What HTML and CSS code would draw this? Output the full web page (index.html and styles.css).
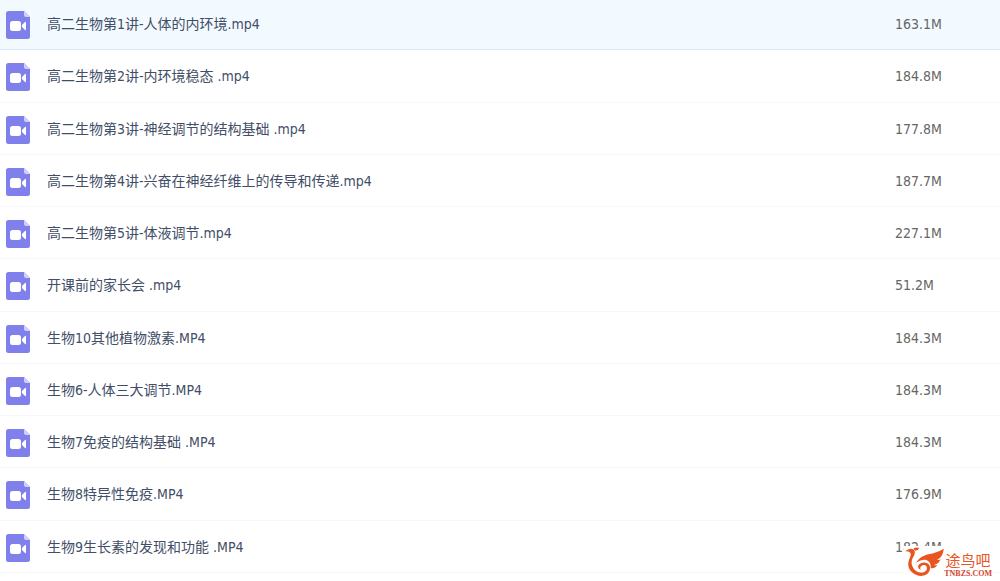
FILE: index.html
```html
<!DOCTYPE html>
<html lang="zh-CN">
<head>
<meta charset="utf-8">
<meta name="viewport" content="width=device-width, initial-scale=1">
<title>高二生物</title>
<link rel="stylesheet" href="styles.css">
</head>
<body>
<svg class="sprite" aria-hidden="true">
  <symbol id="video-file" viewBox="0 0 26 30">
    <path fill="#8080ec" d="M3.500 1h15.500l6 6v19.500a2.500 2.500 0 0 1-2.500 2.500h-19a2.500 2.500 0 0 1-2.500-2.500v-23a2.500 2.500 0 0 1 2.500-2.500z"/>
    <path fill="#d0d0fa" d="M19 1l6 6h-4a2 2 0 0 1-2-2z"/>
    <rect x="5" y="11" width="11" height="10" rx="2.500" fill="#fff"/>
    <path fill="#fff" d="M17 15l3-3q1-.7 1 .5v7q0 1.200-1 .5l-3-3z"/>
  </symbol>
</svg>
<main class="files">
  <table class="file-table">
    <tbody>
      <tr class="file-row selected"><td class="icon-cell"><svg class="file-icon"><use href="#video-file"/></svg></td><td class="name">高二生物第1讲-人体的内环境.mp4</td><td class="size">163.1M</td></tr>
      <tr class="file-row"><td class="icon-cell"><svg class="file-icon"><use href="#video-file"/></svg></td><td class="name">高二生物第2讲-内环境稳态 .mp4</td><td class="size">184.8M</td></tr>
      <tr class="file-row"><td class="icon-cell"><svg class="file-icon"><use href="#video-file"/></svg></td><td class="name">高二生物第3讲-神经调节的结构基础 .mp4</td><td class="size">177.8M</td></tr>
      <tr class="file-row"><td class="icon-cell"><svg class="file-icon"><use href="#video-file"/></svg></td><td class="name">高二生物第4讲-兴奋在神经纤维上的传导和传递.mp4</td><td class="size">187.7M</td></tr>
      <tr class="file-row"><td class="icon-cell"><svg class="file-icon"><use href="#video-file"/></svg></td><td class="name">高二生物第5讲-体液调节.mp4</td><td class="size">227.1M</td></tr>
      <tr class="file-row"><td class="icon-cell"><svg class="file-icon"><use href="#video-file"/></svg></td><td class="name">开课前的家长会 .mp4</td><td class="size">51.2M</td></tr>
      <tr class="file-row"><td class="icon-cell"><svg class="file-icon"><use href="#video-file"/></svg></td><td class="name">生物10其他植物激素.MP4</td><td class="size">184.3M</td></tr>
      <tr class="file-row"><td class="icon-cell"><svg class="file-icon"><use href="#video-file"/></svg></td><td class="name">生物6-人体三大调节.MP4</td><td class="size">184.3M</td></tr>
      <tr class="file-row"><td class="icon-cell"><svg class="file-icon"><use href="#video-file"/></svg></td><td class="name">生物7免疫的结构基础 .MP4</td><td class="size">184.3M</td></tr>
      <tr class="file-row"><td class="icon-cell"><svg class="file-icon"><use href="#video-file"/></svg></td><td class="name">生物8特异性免疫.MP4</td><td class="size">176.9M</td></tr>
      <tr class="file-row"><td class="icon-cell"><svg class="file-icon"><use href="#video-file"/></svg></td><td class="name">生物9生长素的发现和功能 .MP4</td><td class="size">182.4M</td></tr>
    </tbody>
  </table>
  <div class="watermark">
    <svg class="bird" viewBox="0 0 120 93" aria-hidden="true">
      <path fill="#e8551f" d="M3 16Q15 6 25 9Q36 12 31 27C25 38 19 48 26 62C33 80 60 86 68 71C72 60 60 52 51 61Q46 66 50 72C36 65 43 51 57 50C74 48 83 62 76 76C70 89 52 93 38 87C18 79 9 63 14 45C17 34 23 28 19 20Q13 15 3 16Z"/>
      <path fill="#e8551f" d="M28 8Q35 2 46 6Q43 14 34 14Z"/>
      <path fill="#e8551f" d="M36 50C50 28 70 26 88 22Q106 17 119 8C118 28 108 36 99 42Q106 43 110 40C104 52 98 55 89 57Q95 59 100 57C94 66 87 68 80 66C82 53 75 43 63 41Q50 40 36 50Z"/>
    </svg>
    <div class="brand">
      <span class="brand-name">途鸟吧</span>
      <span class="brand-site">TNBZS.COM</span>
    </div>
  </div>
</main>
</body>
</html>
```

FILE: styles.css
```css
body {
  margin: 0;
  background: #fff;
  color: #424e67;
  font-family: "DejaVu Sans Condensed", "Noto Sans", "Noto Sans CJK SC", sans-serif;
  font-size: 14px;
  line-height: 20px;
}

.sprite {
  position: absolute;
  width: 0;
  height: 0;
}

.files {
  position: relative;
  padding-bottom: 8px;
}

.file-table {
  width: 100%;
  table-layout: fixed;
  border-collapse: separate;
  border-spacing: 0;
}

.file-row td {
  box-sizing: border-box;
  height: 52px;
  padding: 0;
  border-bottom: 1px solid #f7f8fb;
  vertical-align: middle;
}

.file-row:nth-child(4n + 2) td {
  height: 53px;
}

.file-row.selected td {
  height: 50px;
  padding-bottom: 2px;
  background: #f3faff;
  border-bottom-color: #d9eaf7;
}

.file-row .icon-cell {
  width: 47px;
  padding-top: 2px;
  padding-left: 5px;
}

.file-icon {
  display: block;
  width: 26px;
  height: 30px;
}

.file-row .size {
  width: 105px;
  color: #666;
}

.watermark {
  position: absolute;
  right: 8px;
  bottom: 3px;
  display: flex;
  align-items: flex-start;
}

.bird {
  width: 40px;
  height: 31px;
  background: #fff;
}

.brand {
  display: flex;
  flex-direction: column;
  align-items: center;
  gap: 2px;
  padding-top: 6px;
  color: #e8551f;
}

.brand-name {
  font-family: "Noto Sans CJK SC", sans-serif;
  font-size: 15px;
  line-height: 16px;
}

.brand-site {
  color: #d6452f;
  font-family: "Liberation Serif", serif;
  font-size: 8px;
  font-weight: 700;
  line-height: 8px;
}
```
